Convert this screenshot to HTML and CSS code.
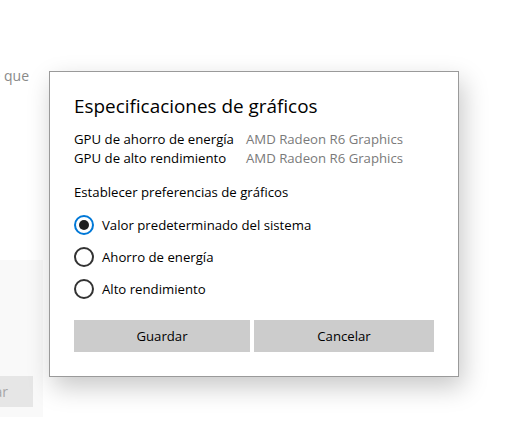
FILE: index.html
```html
<!DOCTYPE html>
<html lang="es">
<head>
<meta charset="utf-8">
<link rel="stylesheet" href="styles.css">
</head>
<body>
<div class="page">
  <div class="bg-col">
    <p class="bg-text">dispositivo de que</p>
    <div class="bg-panel">
      <div class="bg-btn">Guardar</div>
    </div>
  </div>
</div>
<div class="dialog">
  <h1 class="title">Especificaciones de gráficos</h1>
  <div class="specs">
    <span class="label">GPU de ahorro de energía</span><span class="value">AMD Radeon R6 Graphics</span>
    <span class="label">GPU de alto rendimiento</span><span class="value">AMD Radeon R6 Graphics</span>
  </div>
  <p class="pref">Establecer preferencias de gráficos</p>
  <div class="radios">
    <label class="radio"><span class="dot checked"></span>Valor predeterminado del sistema</label>
    <label class="radio"><span class="dot"></span>Ahorro de energía</label>
    <label class="radio"><span class="dot"></span>Alto rendimiento</label>
  </div>
  <div class="buttons">
    <button class="btn">Guardar</button>
    <button class="btn">Cancelar</button>
  </div>
</div>
</body>
</html>
```
FILE: styles.css
```css
* { box-sizing: border-box; }
html, body { margin: 0; padding: 0; background: #fff; }
body {
  font-family: "Segoe UI", "Open Sans", "Noto Sans", sans-serif;
  color: #000;
  width: 531px;
  height: 439px;
  overflow: hidden;
  position: relative;
}
.page { display: flex; }
.bg-col { width: 43px; display: flex; flex-direction: column; }
.bg-text {
  margin: 66px 0 0 0;
  width: 29px;
  white-space: nowrap;
  overflow: hidden;
  direction: rtl;
  text-align: left;
  font-size: 14px;
  line-height: 20px;
  color: #8a8a8a;
}
.bg-panel {
  margin-top: 174px;
  height: 157px;
  background: #f9f9f9;
  display: flex;
  flex-direction: column;
  justify-content: flex-end;
  padding-bottom: 10px;
}
.bg-btn {
  width: 33px;
  height: 31px;
  background: #e6e6e6;
  color: #a6a6a6;
  font-size: 14px;
  line-height: 31px;
  white-space: nowrap;
  overflow: hidden;
  direction: rtl;
  text-align: left;
  padding-right: 25px;
}
.dialog {
  position: absolute;
  left: 49px;
  top: 71px;
  width: 410px;
  height: 306px;
  background: #fff;
  border: 1px solid #9a9a9a;
  box-shadow: 4px 10px 24px rgba(0,0,0,0.22);
  padding: 20px 24px 0 24px;
  display: flex;
  flex-direction: column;
}
.title {
  margin: 0;
  font-size: 18.9px;
  font-weight: 400;
  line-height: 28px;
}
.specs {
  margin-top: 10px;
  display: grid;
  grid-template-columns: max-content max-content;
  column-gap: 12px;
  font-size: 13.2px;
  line-height: 19px;
}
.value { color: #7a7a7a; }
.pref {
  margin: 15px 0 0 0;
  font-size: 13.2px;
  line-height: 19px;
}
.radios {
  margin-top: 13px;
  display: flex;
  flex-direction: column;
  gap: 12px;
}
.radio {
  display: flex;
  align-items: center;
  gap: 8px;
  font-size: 13.2px;
  height: 20px;
}
.dot {
  width: 20px;
  height: 20px;
  border: 2px solid #333;
  border-radius: 50%;
  display: flex;
  align-items: center;
  justify-content: center;
  flex: none;
}
.dot.checked { border-color: #0078d7; }
.dot.checked::after {
  content: "";
  width: 10px;
  height: 10px;
  border-radius: 50%;
  background: #1f1f1f;
}
.buttons {
  margin-top: 21px;
  display: flex;
  gap: 4px;
}
.btn {
  width: 176px;
  height: 32px;
  border: none;
  background: #cccccc;
  font-family: inherit;
  font-size: 13.2px;
  color: #000;
  padding: 0;
}
.btn + .btn { width: 180px; }
```
